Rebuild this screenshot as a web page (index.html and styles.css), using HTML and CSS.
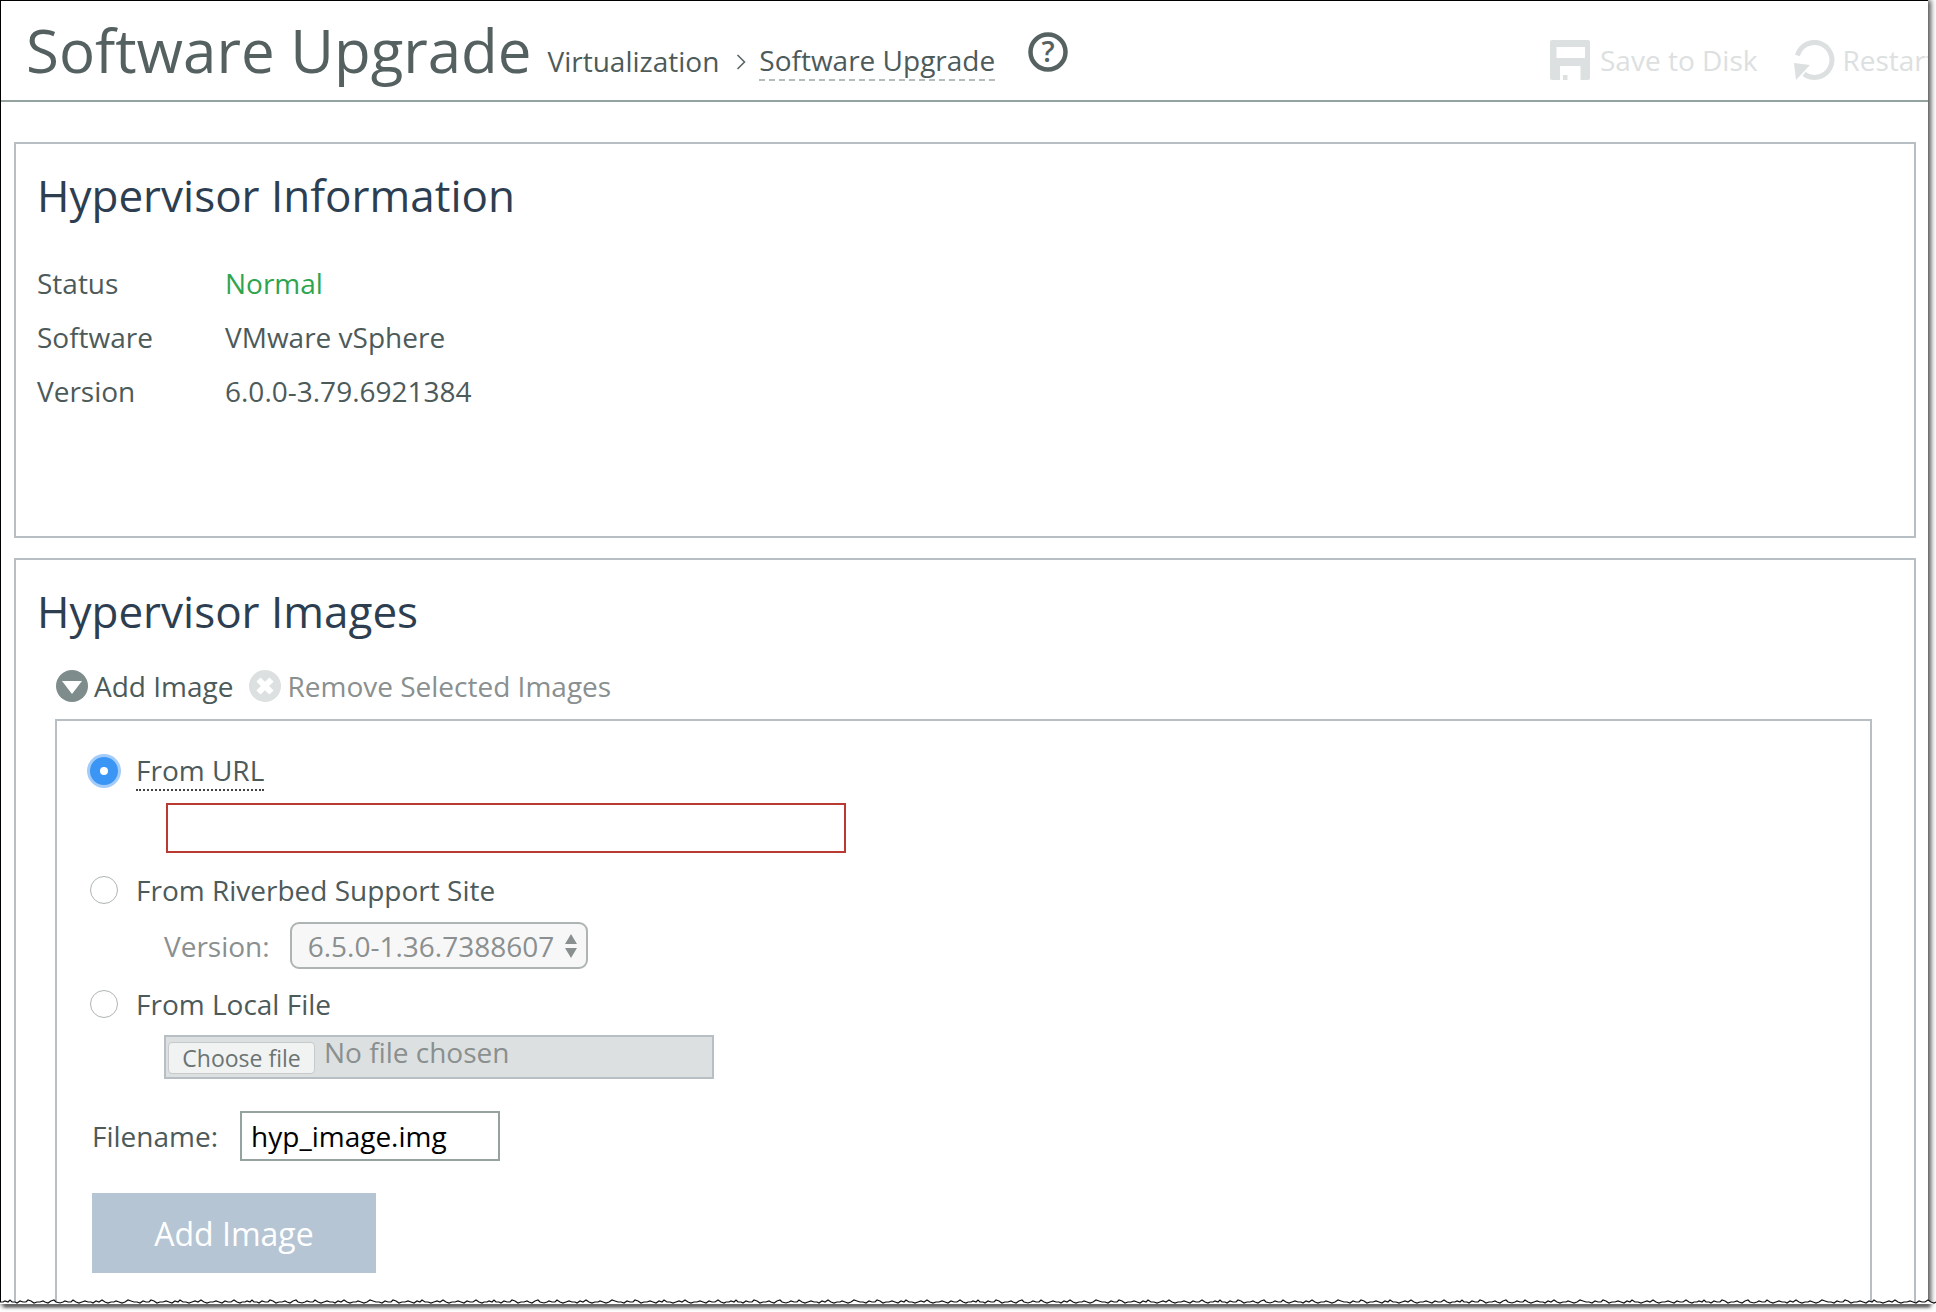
FILE: index.html
```html
<!DOCTYPE html>
<html lang="en">
<head>
<meta charset="utf-8">
<title>Software Upgrade</title>
<link rel="stylesheet" href="styles.css">
</head>
<body>
<div class="shot">
  <header class="topbar">
    <h1 class="title">Software Upgrade</h1>
    <nav class="crumbs">
      <span>Virtualization</span>
      <svg class="chevron" width="10" height="18" viewBox="0 0 10 18"><path d="M1.500 2 8.500 9 1.500 16" fill="none" stroke="#5a6666" stroke-width="1.6"/></svg>
      <span class="crumb-current">Software Upgrade</span>
    </nav>
    <svg class="help" width="40" height="40" viewBox="0 0 40 40"><circle cx="20" cy="20" r="17.500" fill="none" stroke="#566262" stroke-width="4.500"/><text x="20" y="30" text-anchor="middle" class="help-mark">?</text></svg>
    <div class="actions">
      <span class="action">
        <svg width="40" height="40" viewBox="0 0 40 40"><rect width="40" height="40" rx="2" fill="#dde0e0"/><rect x="6.500" y="7" width="28.500" height="11" fill="#fff"/><rect x="10" y="26" width="20.500" height="14" fill="#fff"/><rect x="13" y="35" width="4.500" height="5" fill="#dde0e0"/></svg>
        Save to Disk
      </span>
      <span class="action action-restart">
        <svg width="41" height="40" viewBox="0 0 41 40"><path d="M3.500 15.500A17.500 17.500 0 1 1 10 34" fill="none" stroke="#dde0e0" stroke-width="5"/><path d="M0 23 16 25 2 40Z" fill="#dde0e0"/></svg>
        Restart
      </span>
    </div>
  </header>

  <main class="content">
    <section class="panel panel-info">
      <h2 class="panel-title">Hypervisor Information</h2>
      <dl class="facts">
        <dt>Status</dt><dd class="ok">Normal</dd>
        <dt>Software</dt><dd>VMware vSphere</dd>
        <dt>Version</dt><dd>6.0.0-3.79.6921384</dd>
      </dl>
    </section>

    <section class="panel panel-images">
      <h2 class="panel-title">Hypervisor Images</h2>
      <div class="toolbar">
        <span class="tool">
          <svg width="32" height="32" viewBox="0 0 32 32"><circle cx="16" cy="16" r="16" fill="#7e8c8c"/><path d="M6 11H26L16 24Z" fill="#fff"/></svg>
          Add Image
        </span>
        <span class="tool tool-off">
          <svg width="32" height="32" viewBox="0 0 32 32"><circle cx="16" cy="16" r="16" fill="#dde0e0"/><path d="M9.500 9.500 22.500 22.500M22.500 9.500 9.500 22.500" stroke="#fff" stroke-width="6"/></svg>
          Remove Selected Images
        </span>
      </div>
      <form class="addbox">
        <label class="choice">
          <input class="radio radio-on" type="radio" name="src" checked>
          <span class="hint">From URL</span>
        </label>
        <input class="url" type="text">
        <label class="choice choice-2">
          <input class="radio" type="radio" name="src">
          <span>From Riverbed Support Site</span>
        </label>
        <div class="version">
          <span>Version:</span>
          <div class="select">
            6.5.0-1.36.7388607
            <svg width="14" height="26" viewBox="0 0 14 26"><path d="M7 1 13 11H1ZM7 25 1 15H13Z" fill="#8a9090"/></svg>
          </div>
        </div>
        <label class="choice choice-3">
          <input class="radio" type="radio" name="src">
          <span>From Local File</span>
        </label>
        <div class="file">
          <span class="file-btn">Choose file</span>
          <span class="file-none">No file chosen</span>
        </div>
        <div class="filename">
          <label>Filename:</label>
          <input class="name" type="text" value="hyp_image.img">
        </div>
        <button class="submit" type="button">Add Image</button>
      </form>
    </section>
  </main>
</div>
<svg class="torn" width="1936" height="20" viewBox="0 0 1936 20">
  <defs>
    <filter id="soft" x="-2%" y="-100%" width="104%" height="300%"><feGaussianBlur stdDeviation="1.500"/></filter>
    <pattern id="tear" width="242" height="20" patternUnits="userSpaceOnUse">
      <path d="M0 9 3 9 5 8 8 9 10 7 12 9 15 9 17 10 20 8 23 9 26 9 28 7 31 8 34 10 37 9 40 9 43 8 45 9 48 10 51 8 54 7 56 9 60 10 63 9 65 8 68 9 71 9 73 7 76 9 79 10 82 9 85 8 88 9 91 9 93 10 96 8 99 9 102 7 105 9 108 10 111 9 114 9 116 8 119 9 122 10 125 9 128 7 131 8 134 9 137 9 140 10 143 8 146 9 149 9 151 7 154 8 157 10 160 9 163 9 166 8 169 9 172 10 175 8 178 9 180 7 183 9 186 9 189 10 192 9 195 8 198 9 201 7 204 9 207 10 210 9 213 9 216 8 219 9 222 10 225 8 228 9 231 9 234 7 237 9 240 10 242 9V20H0Z" fill="#fff"/>
      <path d="M0 9 3 9 5 8 8 9 10 7 12 9 15 9 17 10 20 8 23 9 26 9 28 7 31 8 34 10 37 9 40 9 43 8 45 9 48 10 51 8 54 7 56 9 60 10 63 9 65 8 68 9 71 9 73 7 76 9 79 10 82 9 85 8 88 9 91 9 93 10 96 8 99 9 102 7 105 9 108 10 111 9 114 9 116 8 119 9 122 10 125 9 128 7 131 8 134 9 137 9 140 10 143 8 146 9 149 9 151 7 154 8 157 10 160 9 163 9 166 8 169 9 172 10 175 8 178 9 180 7 183 9 186 9 189 10 192 9 195 8 198 9 201 7 204 9 207 10 210 9 213 9 216 8 219 9 222 10 225 8 228 9 231 9 234 7 237 9 240 10 242 9" fill="none" stroke="#111" stroke-width="1.200"/>
    </pattern>
  </defs>
  <rect x="4" y="11" width="1926" height="3" fill="#555" filter="url(#soft)"/>
  <rect x="0" y="0" width="1936" height="11" fill="url(#tear)"/>
</svg>
</body>
</html>
```
FILE: styles.css
```css
* { box-sizing: border-box; }
html, body { margin: 0; padding: 0; background: #fff; }
body { position: relative; height: 1312px; overflow: hidden; font-family: "Open Sans", "Liberation Sans", sans-serif; color: #4d5a5a; }

.shot {
  width: 1928px;
  height: 1304px;
  overflow: hidden;
  background: #fff;
  border-top: 1px solid #000;
  border-left: 1px solid #000;
  box-shadow: 2px 1px 5px 1px #555;
}

.topbar {
  display: flex;
  align-items: flex-start;
  height: 101px;
  border-bottom: 2px solid #94a3a0;
  white-space: nowrap;
}
.title { margin: 8px 0 0 25px; font-size: 60px; line-height: 82px; font-weight: 400; color: #556060; }
.crumbs { display: flex; align-items: center; margin: 41px 0 0 16px; font-size: 28px; line-height: 37px; color: #4d5a5a; }
.chevron { margin: 0 13px 0 17px; }
.crumb-current { border-bottom: 2px dashed #b4bcbc; }
.help { margin: 31px 0 0 33px; }
.help-mark { font-size: 29px; font-weight: 600; fill: #566262; font-family: "Open Sans", sans-serif; }

.actions { display: flex; margin: 39px 0 0 auto; width: 378px; gap: 37px; font-size: 28px; line-height: 40px; color: #dde0e0; flex: none; }
.action { display: flex; align-items: center; gap: 10px; }
.action-restart { gap: 7px; }

.content { padding: 40px 12px 0 13px; }
.panel { border: 2px solid #b8bfc4; padding: 0 21px; }
.panel-info { height: 396px; }
.panel-images { margin-top: 20px; height: 800px; }
.panel-title { margin: 21px 0 0; font-size: 44px; line-height: 60px; font-weight: 400; color: #2d3e50; }

.facts { display: grid; grid-template-columns: 188px 1fr; grid-auto-rows: 54px; margin: 31px 0 0; font-size: 28px; line-height: 54px; }
.facts dt, .facts dd { margin: 0; }
.ok { color: #2ea44f; }

.toolbar { display: flex; gap: 16px; margin: 29px 0 0 19px; font-size: 28px; line-height: 32px; }
.tool { display: flex; align-items: center; gap: 6px; }
.tool-off { color: #8a8f8f; }

.addbox { width: 1817px; height: 700px; margin: 17px 0 0 18px; border: 2px solid #b8bfc4; padding: 33px 0 0 30px; font-size: 28px; }
.choice { display: flex; align-items: center; height: 34px; gap: 18px; }
.radio { appearance: none; flex: none; margin: 0 0 0 3px; width: 28px; height: 28px; border: 1px solid #aeb4b4; border-radius: 50%; background: #fff; }
.radio-on { border: 10px solid #3b95f5; background: #fff; box-shadow: 0 0 0 3px #a3ccf8; }
.hint { border-bottom: 2px dotted #444; line-height: 30px; height: 36px; margin-top: 4px; }
.url { display: block; width: 680px; height: 50px; margin: 15px 0 0 79px; border: 2px solid #b83a33; background: #fff; padding: 0; border-radius: 0; outline: none; }
.choice-2 { margin-top: 20px; }
.version { display: flex; align-items: center; margin: 15px 0 0 77px; gap: 20px; color: #8a8f8f; }
.select { display: flex; align-items: center; justify-content: space-between; width: 298px; height: 47px; padding: 0 8px 0 16px; border: 2px solid #aeb4b4; border-radius: 9px; background: #f7f7f7; }
.choice-3 { margin-top: 18px; }
.file { display: flex; align-items: flex-start; width: 550px; height: 44px; margin: 14px 0 0 77px; border: 2px solid #b8bfc4; background: #dde0e0; padding: 5px 0 0 2px; }
.file-btn { display: block; width: 147px; height: 32px; border: 1px solid #c6caca; border-radius: 4px; background: #f1f2f2; font-size: 23px; line-height: 30px; text-align: center; color: #6a7474; }
.file-none { margin: -8px 0 0 9px; line-height: 36px; color: #8a8f8f; }
.filename { display: flex; align-items: center; margin: 32px 0 0 5px; gap: 22px; }
.name { width: 260px; height: 50px; border: 2px solid #94a3a0; padding: 0 9px; font: inherit; color: #000; border-radius: 0; outline: none; background: #fff; }
.submit { display: block; width: 284px; height: 80px; margin: 32px 0 0 5px; border: 0; background: #b5c5d4; color: #fff; font: inherit; font-size: 32px; }

.torn { position: absolute; left: 0; top: 1293px; }
```
